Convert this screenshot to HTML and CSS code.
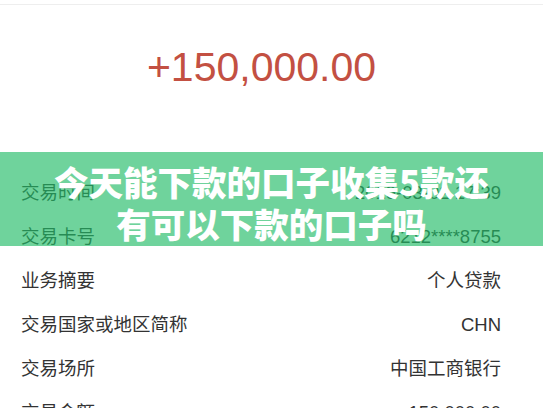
FILE: index.html
```html
<!DOCTYPE html>
<html lang="zh-CN">
<head>
  <meta charset="UTF-8">
  <meta name="viewport" content="width=device-width, initial-scale=1.0">
  <title>交易详情</title>
  <link rel="stylesheet" href="styles.css">
</head>
<body>

  <div class="page">
    <div class="topbar"></div>

    <div class="amount">+150,000.00</div>

    <div class="details">
      <div class="row"><span>交易时间</span><span>2019-03-02 17:39</span></div>
      <div class="row"><span>交易卡号</span><span>6212****8755</span></div>
      <div class="row"><span>业务摘要</span><span>个人贷款</span></div>
      <div class="row"><span>交易国家或地区简称</span><span>CHN</span></div>
      <div class="row"><span>交易场所</span><span>中国工商银行</span></div>
      <div class="row"><span>交易金额</span><span>150,000.00</span></div>
    </div>

    <div class="banner">
      <h1>今天能下款的口子收集5款还<br>有可以下款的口子吗</h1>
    </div>
  </div>

</body>
</html>
```

FILE: styles.css
```css
* {
  margin: 0;
  padding: 0;
  box-sizing: border-box;
}

body {
  background: #fff;
  font-family: "Liberation Sans", "Noto Sans CJK SC", sans-serif;
  overflow: hidden;
}

.page {
  position: relative;
  height: 408px;
  overflow: hidden;
}

.topbar {
  height: 5px;
  border-bottom: 1px solid #eeeeee;
}

.amount {
  padding-top: 37px;
  padding-bottom: 79px;
  line-height: 50px;
  font-size: 41px;
  color: #c35042;
  text-align: center;
  padding-right: 20px;
}

.details {
  padding: 0 42px 0 21px;
}

.row {
  display: flex;
  justify-content: space-between;
  height: 44px;
  line-height: 44px;
  font-size: 18.5px;
  color: #333;
}

.banner {
  position: absolute;
  top: 152px;
  left: 0;
  right: 0;
  height: 94px;
  padding-top: 6px;
  background: rgba(34, 188, 103, 0.65);
  display: flex;
  align-items: center;
  justify-content: center;
}

.banner h1 {
  font-family: "Noto Sans CJK SC", sans-serif;
  font-weight: 900;
  font-size: 34.5px;
  line-height: 42px;
  color: #fff;
  text-align: center;
}
```
